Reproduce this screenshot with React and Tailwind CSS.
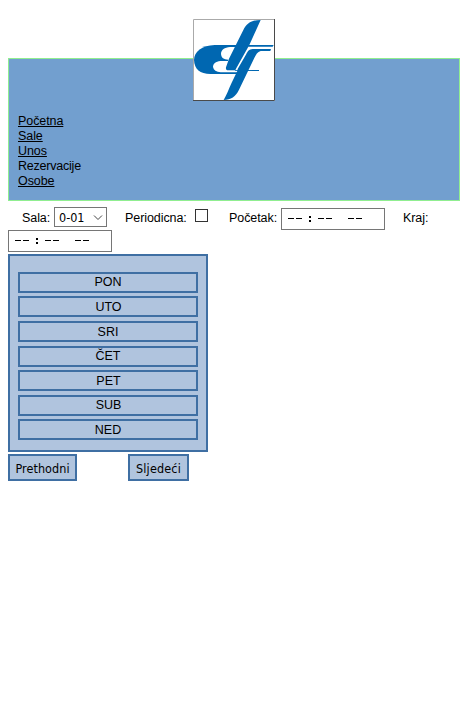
const links = ['Početna', 'Sale', 'Unos', 'Rezervacije', 'Osobe'];

const days = [
  { name: 'PON', box: 'mb-[3px] leading-[17px]' },
  { name: 'UTO', box: 'mb-1 pl-px leading-[19px]' },
  { name: 'SRI', box: 'mb-1 leading-[19px]' },
  { name: 'ČET', box: 'mb-[3px] leading-[17px]' },
  { name: 'PET', box: 'mb-1 pl-px leading-[19px]' },
  { name: 'SUB', box: 'mb-[3px] pl-px leading-[17px]' },
  { name: 'NED', box: 'leading-[19px]' },
];

function Logo() {
  return (
    <svg viewBox="39 27 246 246" className="block h-[82px] w-[82px]">
      <rect x="39" y="27" width="246" height="246" fill="#fff" />
      <path
        fill="#0067b1"
        d="M180 105 H104 C66 106 42 126 42 150 C43 177 60 192 91 192 H180 Z"
      />
      <path
        fill="#fff"
        d="M186 111 H150 C134 112 123 120 123 132 C124 143 131 149 145 149 L144 153 H121 C107 154 99 162 99 171 C101 181 109 186 122 187 H186 Z"
      />
      <path
        fill="#0067b1"
        d="M242 30 C214 30 200 40 190 60 L147 146 L138 172 C137 178 139 181 145 181 L237 180 V183 H165 L168 176 L205 110 H278 L281 105 H208 Z"
      />
      <path
        fill="#0067b1"
        d="M273 117 H218 C207 118 203 124 199 132 L173 177 L172 183 L155 218 C146 238 139 256 131 270 C153 269 167 260 177 239 L207 177 L224 142 C230 130 235 123 246 123 H271 Z"
      />
      <path fill="none" stroke="#aaa" strokeWidth="3" d="M40.500 273 V28.500 H285" />
      <path fill="none" stroke="#4a4a4a" strokeWidth="3" d="M39 271.500 H283.500 V27" />
    </svg>
  );
}

function TimeInput() {
  return (
    <div className="h-[22px] w-[104px] shrink-0 border border-[#767676] bg-white">
      <svg viewBox="0 0 102 20" className="block h-5 w-[102px]" shapeRendering="crispEdges">
        <path
          stroke="#000"
          strokeWidth="1"
          d="M6 9.500h6M14 9.500h6M36 9.500h6M44 9.500h6M66 9.500h6M74 9.500h6"
        />
        <path fill="#000" d="M27 7h2v2h-2zM27 11h2v2h-2z" />
      </svg>
    </div>
  );
}

export default function App() {
  return (
    <div className="h-[719px] w-[468px] overflow-hidden bg-white px-2 pt-[58px] font-['Liberation_Sans',Arial,sans-serif] text-[12.500px] leading-[15px] text-black">
      <header className="relative h-[143px] border border-[#90ee90] bg-[#729fcf] pt-[55px] pl-[9px]">
        <div className="absolute top-[-40px] left-[184px]">
          <Logo />
        </div>
        <nav className="flex flex-col items-start">
          {links.map((link) => (
            <a
              key={link}
              className={link === 'Rezervacije' ? 'tracking-[-0.22px]' : 'tracking-[-0.08px] underline'}
            >
              {link}
            </a>
          ))}
        </nav>
      </header>

      <form>
        <div className="flex h-[29px] pt-1.5 tracking-[-0.07px]">
          <label className="mt-1 ml-3.5 w-8 whitespace-nowrap">Sala:</label>
          <div className="flex h-5 w-[53px] items-center border border-[#767676] bg-white pl-1 font-['DejaVu_Sans_Condensed','DejaVu_Sans',sans-serif] text-[12.500px] tracking-normal">
            <span className="w-[34px] whitespace-nowrap">0-01</span>
            <svg viewBox="0 0 10 6" className="mt-0.5 h-1.5 w-2.5" fill="none" stroke="#444">
              <path d="M1 0.500 5 4.500 9 0.500" />
            </svg>
          </div>
          <label className="mt-1 ml-[18px] w-[70px] whitespace-nowrap">Periodicna:</label>
          <span className="mt-0.5 h-[13px] w-[13px] border border-[#333] bg-white" />
          <label className="mt-1 ml-[21px] w-[52px] whitespace-nowrap">Početak:</label>
          <div className="mt-px">
            <TimeInput />
          </div>
          <label className="mt-1 ml-[18px] whitespace-nowrap">Kraj:</label>
        </div>
        <TimeInput />
      </form>

      <section className="mt-0.5 h-[198px] w-[200px] border-2 border-[#3f6fa3] bg-[#b0c4de] px-2 pt-4">
        {days.map((day) => (
          <div
            key={day.name}
            className={`h-[21px] border-2 border-[#3f6fa3] text-center ${day.box}`}
          >
            {day.name}
          </div>
        ))}
      </section>

      <div className="mt-0.5 flex gap-[51px] font-['DejaVu_Sans_Condensed','DejaVu_Sans',sans-serif] text-[12.500px]">
        <button className="h-[27px] w-[69px] border-2 border-[#3f6fa3] bg-[#b0c4de] pt-px tracking-[0.06px] whitespace-nowrap">Prethodni</button>
        <button className="h-[27px] w-[61px] border-2 border-[#3f6fa3] bg-[#b0c4de] pt-px tracking-[0.15px] whitespace-nowrap">Sljedeći</button>
      </div>
    </div>
  );
}
